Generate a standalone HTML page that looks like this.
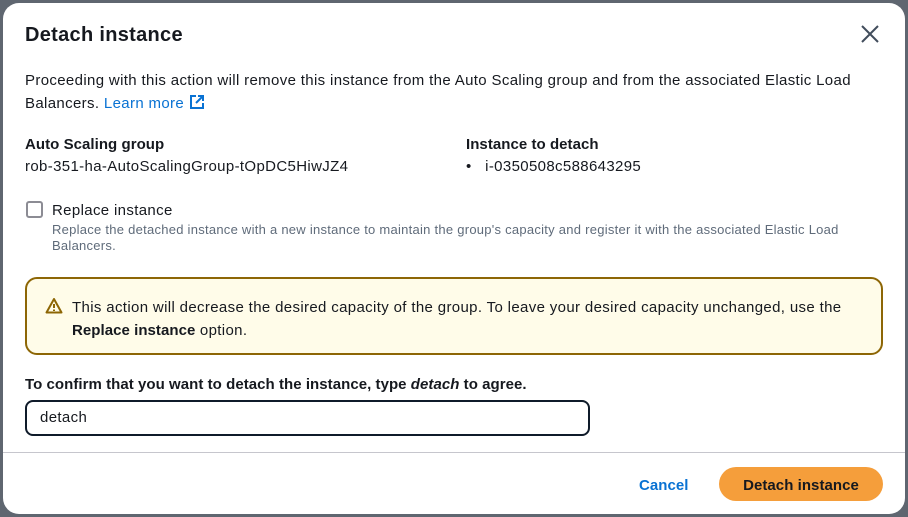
<!DOCTYPE html><html><head><style>
body{margin:0;width:908px;height:517px;background:#5f6670;font-family:"Liberation Sans",sans-serif;color:#16191f;position:relative;overflow:hidden}
.m{position:absolute;left:3px;top:3px;width:902px;height:511px;background:#fff;border-radius:16px}
.a{position:absolute;white-space:nowrap}
.t{font-size:15px;letter-spacing:0.35px}
.s{font-size:13px;letter-spacing:0.26px;color:#5f6b7a}
b{font-weight:700;letter-spacing:0.05px}
</style></head><body><div class="m"></div>
<div class="a" style="left:25px;top:24px;font-size:20px;font-weight:700;letter-spacing:0.3px">Detach instance</div>
<svg class="a" style="left:860px;top:24px" width="20" height="20"><path d="M2 2L18 18M18 2L2 18" stroke="#414d5c" stroke-width="2"/></svg>
<div class="a t" style="left:25px;top:69px;line-height:23px">Proceeding with this action will remove this instance from the Auto Scaling group and from the associated Elastic Load<br>Balancers. <span style="color:#0972d3">Learn more</span> <svg width="16" height="16" style="vertical-align:-2px"><path d="M7 2H2v12h12V9M9 2h5v5M14 2L7 9" stroke="#0972d3" stroke-width="2" fill="none"/></svg></div>
<div class="a t" style="left:25px;top:136px"><b>Auto Scaling group</b></div>
<div class="a t" style="left:25px;top:158px">rob-351-ha-AutoScalingGroup-tOpDC5HiwJZ4</div>
<div class="a t" style="left:466px;top:136px"><b>Instance to detach</b></div>
<div class="a t" style="left:466px;top:158px">•&nbsp;&nbsp;&nbsp;i-0350508c588643295</div>
<div class="a" style="left:26px;top:201px;width:13px;height:13px;border:2px solid #8c8c94;border-radius:3px"></div>
<div class="a t" style="left:52px;top:202px">Replace instance</div>
<div class="a s" style="left:52px;top:222px;line-height:16px">Replace the detached instance with a new instance to maintain the group's capacity and register it with the associated Elastic Load<br>Balancers.</div>
<div class="a" style="left:25px;top:277px;width:854px;height:74px;border:2px solid #8d6605;border-radius:12px;background:#fffce9"></div>
<svg class="a" style="left:45px;top:297px" width="18" height="17"><path d="M9 2L1.5 15.5h15z" fill="none" stroke="#8d6605" stroke-width="2" stroke-linejoin="round"/><path d="M9 7v4M9 12.5v1.5" stroke="#8d6605" stroke-width="2"/></svg>
<div class="a t" style="left:72px;top:296px;line-height:23px">This action will decrease the desired capacity of the group. To leave your desired capacity unchanged, use the<br><b>Replace instance</b> option.</div>
<div class="a t" style="left:25px;top:376px"><b>To confirm that you want to detach the instance, type <i>detach</i> to agree.</b></div>
<div class="a" style="left:25px;top:400px;width:561px;height:32px;border:2px solid #0f1b2a;border-radius:8px"></div>
<div class="a t" style="left:40px;top:409px">detach</div>
<div class="a" style="left:3px;top:452px;width:902px;height:1px;background:#c6c6cd"></div>
<div class="a t" style="left:639px;top:477px;color:#0972d3"><b>Cancel</b></div>
<div class="a" style="left:719px;top:467px;width:164px;height:34px;border-radius:17px;background:#f59e3b"></div>
<div class="a t" style="left:719px;top:477px;width:164px;text-align:center"><b>Detach instance</b></div>
</body></html>
